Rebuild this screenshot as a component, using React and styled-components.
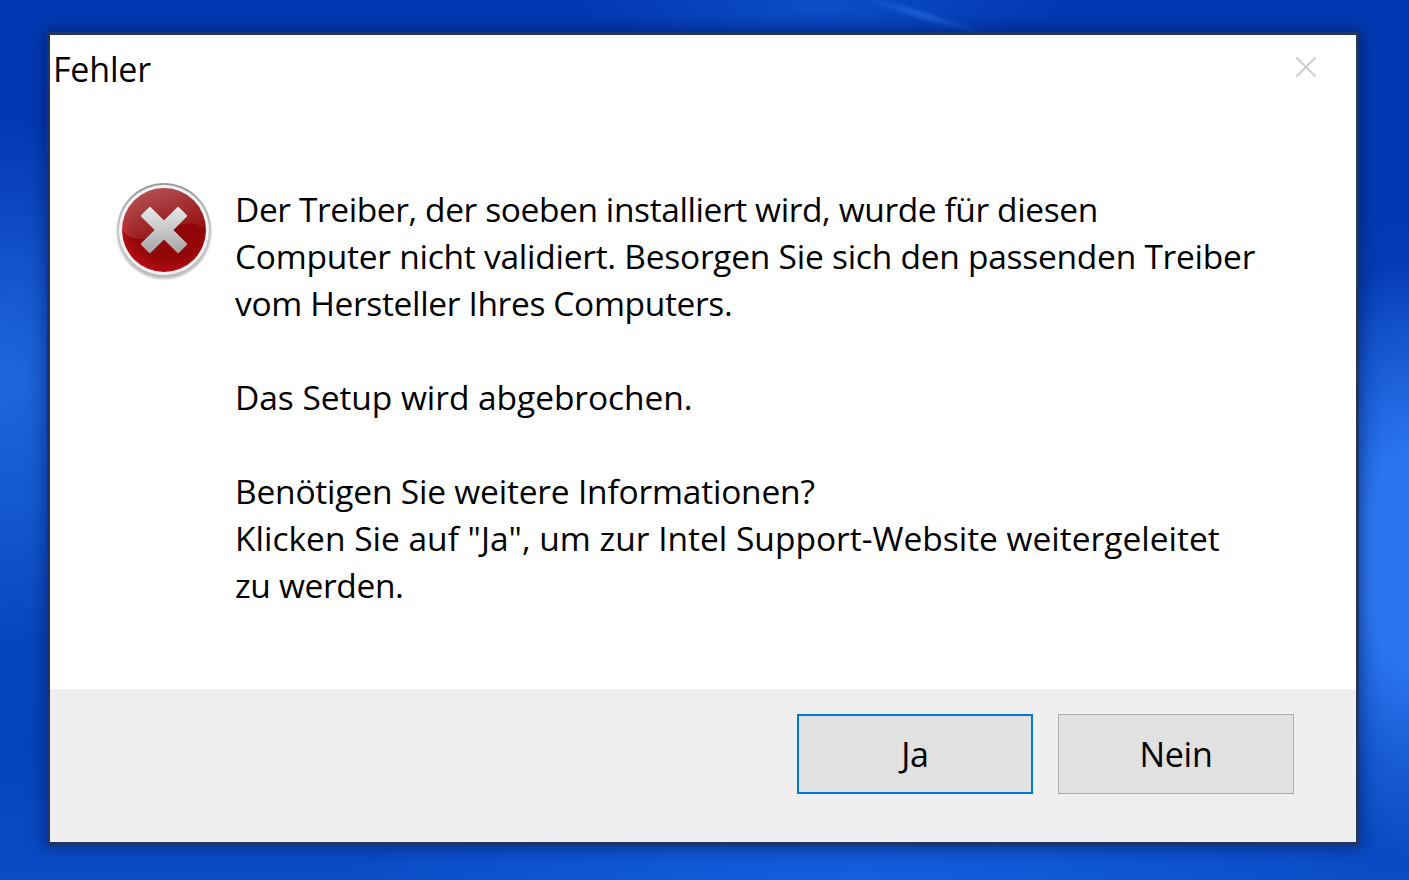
import React from "react";
import styled, { createGlobalStyle } from "styled-components";

const GlobalStyle = createGlobalStyle`
    html, body {
        margin: 0;
        padding: 0;
        height: 100%;
        overflow: hidden;
    }
    #root {
        height: 100%;
    }
`;

const Desktop = styled.div`
    position: relative;
    overflow: hidden;
    box-sizing: border-box;
    height: 880px;
    padding: 32px 50px 35px 47px;
    font-family: "Open Sans", "Noto Sans", sans-serif;
    color: #000;
    background:
        radial-gradient(ellipse 130px 300px at 1409px 560px, #2b74ee 0%, #2b74ee 35%, rgba(43, 116, 238, 0) 100%),
        radial-gradient(ellipse 260px 260px at 0 380px, #1f66de 0%, rgba(31, 102, 222, 0) 100%),
        radial-gradient(ellipse 520px 70px at 860px 880px, #1560de 0%, rgba(21, 96, 222, 0) 100%),
        radial-gradient(ellipse 240px 40px at 820px 8px, #0b4dc8 0%, rgba(11, 77, 200, 0) 100%),
        linear-gradient(180deg, #0338b2 0%, #0338b2 25%, #0949c2 55%, #0543bb 85%, #0a4cc6 100%);
`;

const Streak = styled.div`
    position: absolute;
    left: 862px;
    top: 14px;
    width: 130px;
    height: 5px;
    transform: rotate(17deg);
    filter: blur(2px);
    background: linear-gradient(90deg, rgba(46, 116, 235, 0), #2566de 45%, rgba(46, 116, 235, 0));
`;

const Window = styled.div`
    position: relative;
    display: flex;
    flex-direction: column;
    box-sizing: border-box;
    height: 813px;
    border: 3px solid #1f3563;
    background: #fff;
    box-shadow: 0 0 14px 3px rgba(0, 20, 70, 0.45);
`;

const TitleBar = styled.div`
    display: flex;
    justify-content: space-between;
    box-sizing: border-box;
    height: 71px;
    padding: 11px 40px 0 3px;
    font-size: 34px;
    line-height: 46px;
    letter-spacing: -0.2px;
`;

const CloseIcon = styled.svg`
    width: 20px;
    height: 20px;
    margin-top: 11px;
    stroke: #cfcfcf;
    stroke-width: 2;
`;

const Content = styled.div`
    flex: 1;
    display: flex;
    padding: 80px 0 0 65px;
`;

const ErrorIcon = styled.svg`
    flex: none;
    width: 98px;
    height: 100px;
    margin: -4px 22px 0 0;
`;

const Message = styled.div`
    font-size: 33.5px;
    line-height: 47px;
`;

const Paragraph = styled.p`
    margin: 0 0 47px;
`;

const Line = styled.span`
    display: block;
    white-space: nowrap;
    letter-spacing: ${(p) => p.$tracking}px;
`;

const Footer = styled.div`
    display: flex;
    justify-content: flex-end;
    gap: 25px;
    height: 153px;
    box-sizing: border-box;
    padding: 25px 62px 0 0;
    background: #efefef;
`;

const Button = styled.div`
    box-sizing: border-box;
    width: 236px;
    height: 80px;
    display: flex;
    align-items: center;
    justify-content: center;
    font-size: 34px;
    letter-spacing: -0.3px;
    background: #e1e1e1;
    border: ${(p) => (p.$focused ? "2px solid #0078d7" : "1px solid #adadad")};
`;

const DialogError = () => (
    <ErrorIcon viewBox="0 0 98 100">
        <defs>
            <radialGradient id="disc" cx="55%" cy="42%" r="66%">
                <stop offset="0%" stopColor="#8d0508" />
                <stop offset="66%" stopColor="#930608" />
                <stop offset="100%" stopColor="#c4121a" />
            </radialGradient>
            <linearGradient id="gloss" x1="0" y1="0" x2="0.6" y2="1">
                <stop offset="0%" stopColor="#fff" stopOpacity="0.34" />
                <stop offset="100%" stopColor="#fff" stopOpacity="0.04" />
            </linearGradient>
            <linearGradient id="ring" x1="0" y1="0" x2="0" y2="1">
                <stop offset="0%" stopColor="#9a9a9a" />
                <stop offset="55%" stopColor="#c9c9c9" />
                <stop offset="100%" stopColor="#bcbcbc" />
            </linearGradient>
            <linearGradient id="cross" x1="0" y1="0" x2="0" y2="1">
                <stop offset="0%" stopColor="#e6e6e6" />
                <stop offset="100%" stopColor="#a8a8a8" />
            </linearGradient>
            <filter id="soft">
                <feGaussianBlur stdDeviation="1.2" />
            </filter>
        </defs>
        <circle cx="49" cy="50" r="47" fill="#000" opacity="0.25" filter="url(#soft)" />
        <circle cx="49" cy="48" r="47" fill="url(#ring)" />
        <circle cx="49" cy="48" r="45" fill="#f2f2f2" />
        <circle cx="49" cy="48" r="42" fill="url(#disc)" />
        <path d="M7 48a42 42 0 0 1 84 0c-10-10-26-8-42 2C33 60 16 60 7 48z" fill="url(#gloss)" />
        <polygon
            points="49,40.2 63.1,26.1 70.9,33.9 56.8,48 70.9,62.1 63.1,69.9 49,55.8 34.9,69.9 27.1,62.1 41.2,48 27.1,33.9 34.9,26.1"
            fill="url(#cross)"
            stroke="url(#cross)"
            strokeWidth="2.4"
            strokeLinejoin="round"
        />
    </ErrorIcon>
);

export default function App() {
    return (
        <Desktop>
            <GlobalStyle />
            <Streak />
            <Window>
                <TitleBar>
                    <span>Fehler</span>
                    <CloseIcon viewBox="0 0 20 20">
                        <path d="M0 0 L20 20 M20 0 L0 20" />
                    </CloseIcon>
                </TitleBar>
                <Content>
                    <DialogError />
                    <Message>
                        <Paragraph>
                            <Line $tracking={-0.4}>Der Treiber, der soeben installiert wird, wurde für diesen</Line>
                            <Line $tracking={-0.25}>Computer nicht validiert. Besorgen Sie sich den passenden Treiber</Line>
                            <Line $tracking={-0.35}>vom Hersteller Ihres Computers.</Line>
                        </Paragraph>
                        <Paragraph>
                            <Line $tracking={-0.05}>Das Setup wird abgebrochen.</Line>
                        </Paragraph>
                        <Paragraph>
                            <Line $tracking={-0.2}>Benötigen Sie weitere Informationen?</Line>
                            <Line $tracking={0}>Klicken Sie auf "Ja", um zur Intel Support-Website weitergeleitet</Line>
                            <Line $tracking={-0.35}>zu werden.</Line>
                        </Paragraph>
                    </Message>
                </Content>
                <Footer>
                    <Button $focused>Ja</Button>
                    <Button>Nein</Button>
                </Footer>
            </Window>
        </Desktop>
    );
}
